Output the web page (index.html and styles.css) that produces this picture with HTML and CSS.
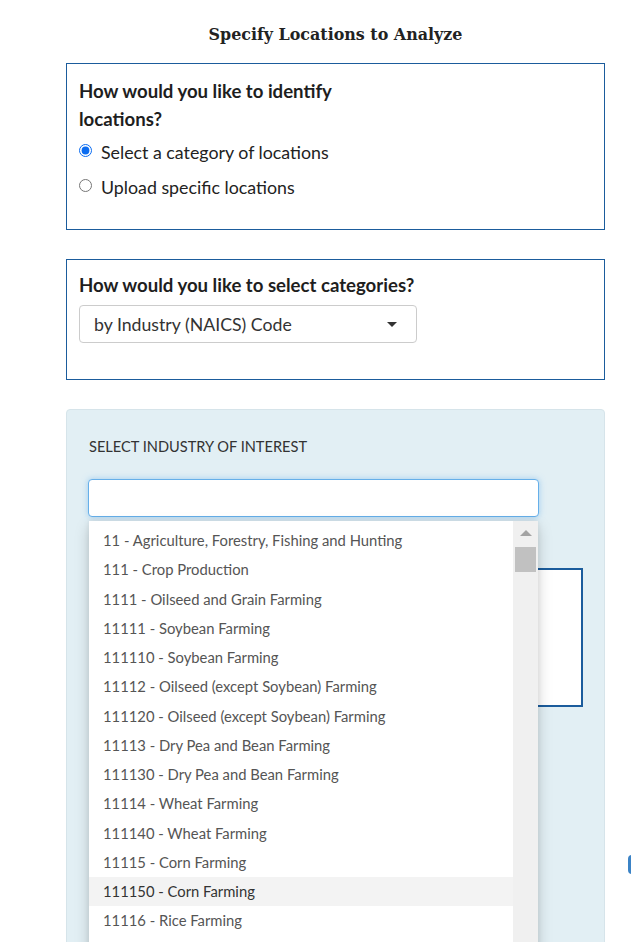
FILE: index.html
```html
<!DOCTYPE html>
<html lang="en">
<head>
<meta charset="utf-8">
<title>Specify Locations to Analyze</title>
<link rel="stylesheet" href="styles.css">
</head>
<body>
<main class="page">
  <h1 class="title">Specify Locations to Analyze</h1>

  <section class="card card-identify">
    <h2 class="question question-narrow">How would you like to identify locations?</h2>
    <label class="radio"><input type="radio" name="how" checked><span>Select a category of locations</span></label>
    <label class="radio"><input type="radio" name="how"><span>Upload specific locations</span></label>
  </section>

  <section class="card card-category">
    <h2 class="question">How would you like to select categories?</h2>
    <div class="select">
      <span>by Industry (NAICS) Code</span>
      <span class="caret"></span>
    </div>
  </section>

  <section class="panel">
    <div class="panel-label">SELECT INDUSTRY OF INTEREST</div>
    <div class="combo">
      <div class="combo-input"></div>
      <div class="dropdown">
        <ul class="options">
          <li>11 - Agriculture, Forestry, Fishing and Hunting</li>
          <li>111 - Crop Production</li>
          <li>1111 - Oilseed and Grain Farming</li>
          <li>11111 - Soybean Farming</li>
          <li>111110 - Soybean Farming</li>
          <li>11112 - Oilseed (except Soybean) Farming</li>
          <li>111120 - Oilseed (except Soybean) Farming</li>
          <li>11113 - Dry Pea and Bean Farming</li>
          <li>111130 - Dry Pea and Bean Farming</li>
          <li>11114 - Wheat Farming</li>
          <li>111140 - Wheat Farming</li>
          <li>11115 - Corn Farming</li>
          <li class="active">111150 - Corn Farming</li>
          <li>11116 - Rice Farming</li>
        </ul>
        <div class="scrollbar">
          <span class="scroll-up"></span>
          <span class="scroll-thumb"></span>
        </div>
      </div>
    </div>
    <div class="inner-box"></div>
  </section>
</main>
<div class="edge-button"></div>
</body>
</html>
```

FILE: styles.css
```css
* { box-sizing: border-box; }

html, body {
  margin: 0;
  padding: 0;
  background: #fff;
  overflow: hidden;
}

body {
  width: 631px;
  height: 942px;
  font-family: "Lato", "Noto Sans", sans-serif;
  color: #222;
  position: relative;
}

.page {
  width: 539px;
  margin-left: 66px;
  display: flex;
  flex-direction: column;
}

.title {
  margin: 0;
  padding-top: 23px;
  height: 63px;
  text-align: center;
  font-family: "DejaVu Serif", "Liberation Serif", serif;
  font-weight: bold;
  font-size: 15.9px;
  line-height: 24px;
  color: #222;
}

.card {
  border: 1px solid #1b5c9c;
  padding: 13px 12px 0 12px;
}

.card-identify { height: 167px; }
.card-category { height: 121px; margin-top: 29px; padding-top: 11px; }

.question {
  margin: 0;
  font-size: 18.6px;
  font-weight: bold;
  line-height: 28px;
  color: #1e1e1e;
}

.question-narrow { width: 275px; }

.radio {
  display: flex;
  align-items: center;
  height: 35px;
  font-size: 17.8px;
  color: #222;
}

.radio:first-of-type { margin-top: 1px; }

.radio input {
  margin: 0 9px 0 0;
  width: 13px;
  height: 13px;
  accent-color: #0b6cf0;
  position: relative;
  top: -1px;
}

.select {
  margin-top: 6px;
  width: 338px;
  height: 38px;
  border: 1px solid #ccc;
  border-radius: 4px;
  display: flex;
  align-items: center;
  justify-content: space-between;
  padding: 0 19px 0 14px;
  font-size: 17.7px;
  color: #333;
}

.caret {
  width: 0;
  height: 0;
  border-left: 5px solid transparent;
  border-right: 5px solid transparent;
  border-top: 5px solid #333;
}

.panel {
  margin-top: 29px;
  height: 560px;
  background: #e2eff4;
  border: 1px solid #d6e4ea;
  border-radius: 4px;
  padding: 27px 21px 0 21px;
  display: flex;
  flex-direction: column;
}

.panel-label {
  font-size: 14.6px;
  line-height: 20px;
  color: #333;
  padding-left: 1px;
}

.combo {
  position: relative;
  margin-top: 22px;
  width: 451px;
  z-index: 2;
}

.combo-input {
  height: 38px;
  background: #fff;
  border: 1px solid #66afe9;
  border-radius: 4px;
  box-shadow: 0 0 6px rgba(102, 175, 233, 0.55);
}

.dropdown {
  position: absolute;
  left: 1px;
  top: 42px;
  width: 449px;
  height: 440px;
  background: #fff;
  box-shadow: 0 6px 14px rgba(0, 0, 0, 0.18), 0 0 6px rgba(0, 0, 0, 0.08);
  display: flex;
}

.options {
  list-style: none;
  margin: 0;
  padding: 5px 0 0 0;
  flex: 1;
}

.options li {
  height: 29.25px;
  line-height: 29.25px;
  padding-left: 14px;
  font-size: 14.8px;
  color: #555;
  white-space: nowrap;
}

.options li.active {
  background: #f3f3f3;
  color: #333;
}

.scrollbar {
  width: 25px;
  background: #f0f0f0;
  display: flex;
  flex-direction: column;
  align-items: center;
  padding-top: 9px;
}

.scroll-up {
  width: 0;
  height: 0;
  border-left: 6px solid transparent;
  border-right: 6px solid transparent;
  border-bottom: 6px solid #a3a3a3;
}

.scroll-thumb {
  margin-top: 11px;
  width: 21px;
  height: 25px;
  background: #c1c1c1;
}

.inner-box {
  margin-top: 51px;
  margin-left: 20px;
  width: 475px;
  height: 139px;
  background: #fff;
  border: 2px solid #1b5c9c;
}

.edge-button {
  position: absolute;
  left: 628px;
  top: 855px;
  width: 14px;
  height: 19px;
  background: #3b83c6;
  border-radius: 4px;
}
```
